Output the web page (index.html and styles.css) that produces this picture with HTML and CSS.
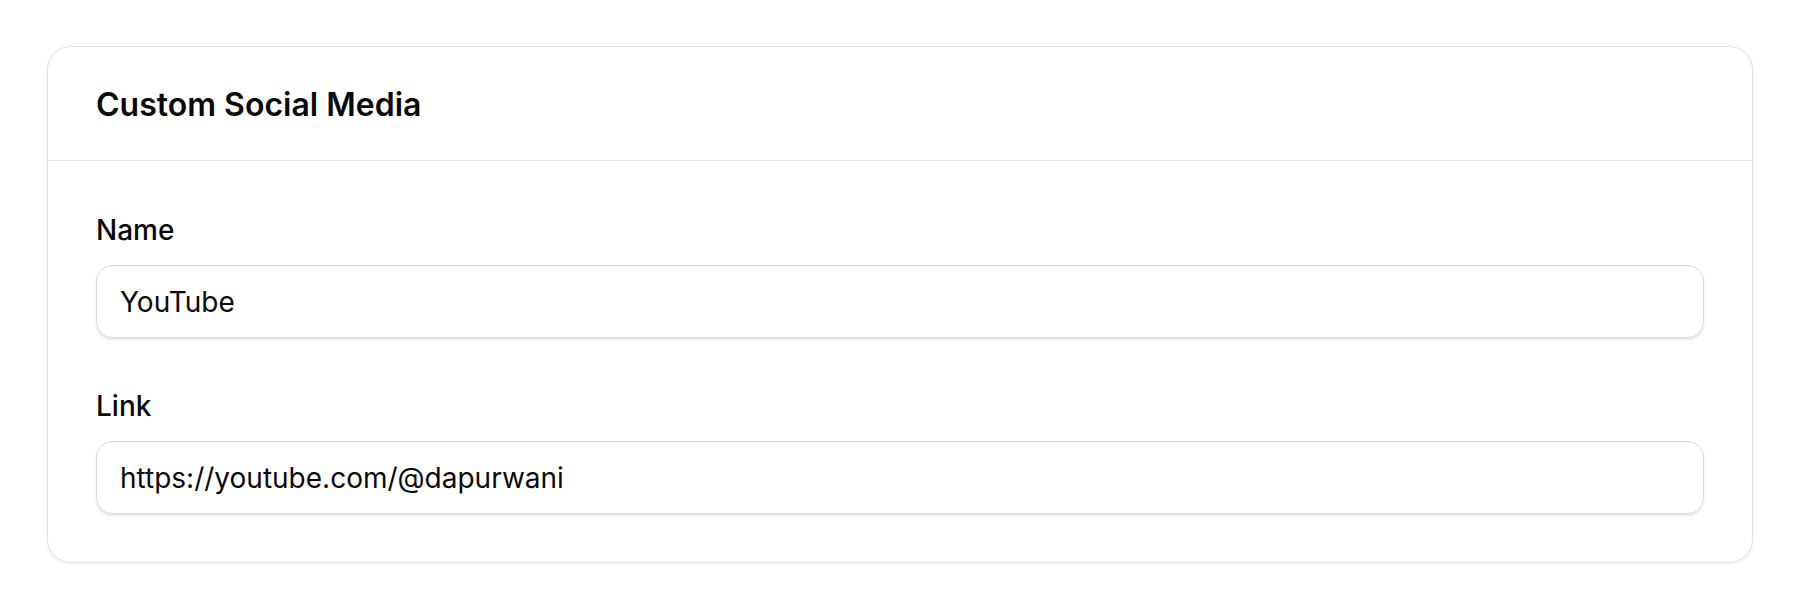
FILE: index.html
```html
<!DOCTYPE html>
<html lang="en">
<head>
<meta charset="utf-8">
<title>Custom Social Media</title>
<link rel="stylesheet" href="styles.css">
</head>
<body>
<main class="page">
  <section class="card">
    <header class="card-header">
      <h2 class="card-title">Custom Social Media</h2>
    </header>
    <div class="card-body">
      <div class="field">
        <label class="field-label">Name</label>
        <div class="field-input">YouTube</div>
      </div>
      <div class="field">
        <label class="field-label">Link</label>
        <div class="field-input">https://youtube.com/@dapurwani</div>
      </div>
    </div>
  </section>
</main>
</body>
</html>
```
FILE: styles.css
```css
* { box-sizing: border-box; }
html, body {
  margin: 0;
  padding: 0;
  background: #ffffff;
}
body {
  font-family: Inter, "Noto Sans", "Liberation Sans", sans-serif;
  color: #0a0a0a;
}
.page {
  padding: 46px 47px 47px;
}
.card {
  background: #ffffff;
  border: 1px solid #e2e2e2;
  border-radius: 24px;
  box-shadow: 0 1px 3px rgba(0, 0, 0, 0.08);
}
.card-header {
  padding: 35px 48px 33px;
  border-bottom: 1px solid #e2e2e2;
}
.card-title {
  margin: 0;
  font-size: 32px;
  line-height: 45px;
  font-weight: 600;
}
.card-body {
  padding: 47px 48px 48px;
  display: flex;
  flex-direction: column;
  gap: 46px;
}
.field {
  display: flex;
  flex-direction: column;
  gap: 13px;
}
.field-label {
  font-size: 28px;
  line-height: 44px;
  font-weight: 500;
}
.field-input {
  height: 73px;
  display: flex;
  align-items: center;
  padding: 0 23px;
  border: 1px solid #d8d8d8;
  border-radius: 16px;
  box-shadow: 0 1.5px 2px rgba(0, 0, 0, 0.1);
  font-size: 28px;
  font-weight: 400;
}
```
